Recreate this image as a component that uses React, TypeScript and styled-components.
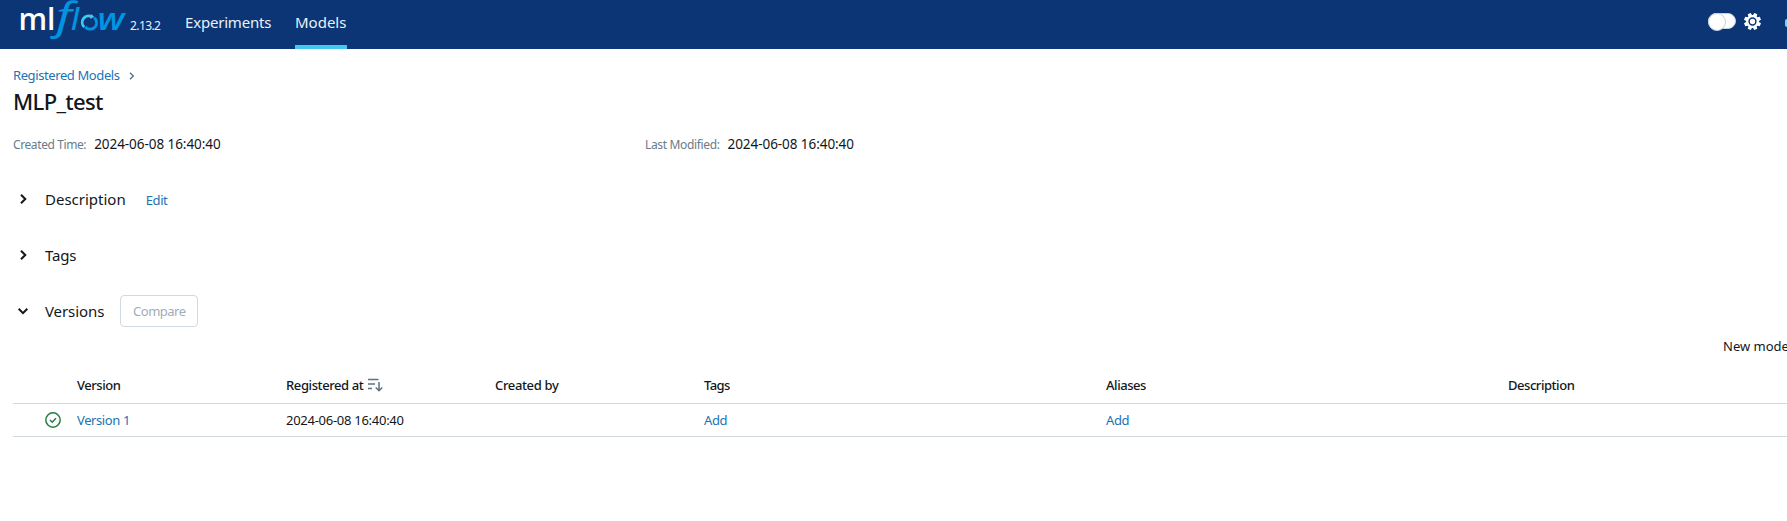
import React from 'react';
import styled, { createGlobalStyle } from 'styled-components';

const Global = createGlobalStyle`
  * { box-sizing: border-box; }
  html, body { margin: 0; padding: 0; overflow: hidden; background: #fff; }
  body { font-family: "Noto Sans", "Open Sans", sans-serif; font-size: 13px; color: #11171c; }
`;

const Page = styled.div`
  width: 1787px;
  height: 521px;
  overflow: hidden;
`;

const Header = styled.header`
  display: flex;
  height: 49px;
  background: #0b3574;
  color: #e7f1fb;
  overflow: hidden;
`;

const Logo = styled.svg`
  flex: none;
  width: 110px;
  height: 45px;
  margin-left: 18px;
  overflow: visible;
`;

const Release = styled.span`
  width: 57px;
  padding-left: 2px;
  font-size: 12px;
  line-height: 52px;
  letter-spacing: -0.6px;
`;

const NavItem = styled.a<{ $active?: boolean; $w: number; $ls: number }>`
  flex: none;
  width: ${p => p.$w}px;
  height: 49px;
  margin-right: 24px;
  font-size: 15px;
  line-height: 45px;
  letter-spacing: ${p => p.$ls}px;
  white-space: nowrap;
  border-bottom: 4px solid ${p => (p.$active ? '#43c9ed' : 'transparent')};
`;

const HeaderTools = styled.div`
  display: flex;
  align-items: center;
  flex: none;
  height: 42px;
  margin-left: auto;
`;

const Toggle = styled.span`
  width: 28px;
  height: 16px;
  border-radius: 8px;
  background: #fff;
  border: 1px solid #c5d0dc;
  margin-right: 8px;
  &::before {
    content: '';
    display: block;
    width: 16px;
    height: 16px;
    margin: -1px;
    border-radius: 50%;
    border: 1px solid #c5d0dc;
    background: #fff;
  }
`;

const Gear = styled.svg`
  width: 17px;
  height: 17px;
  margin-right: 24px;
`;

const Edge = styled.span`
  width: 2px;
  height: 8px;
  margin-top: 4px;
  border-radius: 3px 0 0 3px;
  background: #7fd0ee;
`;

const Main = styled.main`
  padding: 16px 0 0 13px;
`;

const Text = styled.span<{ $size?: number; $ls?: number; $color?: string; $weight?: number }>`
  font-size: ${p => p.$size ?? 13}px;
  letter-spacing: ${p => p.$ls ?? 0}px;
  color: ${p => p.$color ?? '#11171c'};
  font-weight: ${p => p.$weight ?? 400};
  white-space: nowrap;
`;

const Link = styled(Text).attrs({ as: 'a' })`
  color: #2272b4;
`;

const Breadcrumb = styled.nav`
  display: flex;
  align-items: center;
  height: 20px;
  svg { margin: 2px 0 0 9px; }
`;

const Title = styled.h1`
  height: 32px;
  margin: 0;
  font-size: 22px;
  line-height: 32px;
  font-weight: 500;
  letter-spacing: -0.65px;
`;

const Meta = styled.div`
  display: grid;
  grid-template-columns: 632px 1fr;
  height: 20px;
  margin-top: 17px;
`;

const MetaItem = styled.div`
  display: flex;
  align-items: baseline;
  gap: 8px;
  line-height: 20px;
`;

const Sections = styled.div`
  display: grid;
  grid-auto-rows: 56px;
  margin-top: 17px;
`;

const Section = styled.section`
  display: flex;
  align-items: center;
  svg { margin: 0 16px 0 4px; flex: none; }
`;

const EditLink = styled(Link)`
  margin: 2px 0 0 20px;
`;

const CompareButton = styled.button`
  width: 78px;
  height: 32px;
  margin-left: 16px;
  padding: 0;
  border: 1px solid #d1d9e1;
  border-radius: 4px;
  background: #fff;
  color: #a0adba;
  font: 13px "Noto Sans", sans-serif;
  letter-spacing: -0.5px;
`;

const Notice = styled.div`
  height: 20px;
  margin: -3px 0 0 1710px;
  line-height: 20px;
`;

const Row = styled.div<{ $h: number }>`
  display: grid;
  grid-template-columns: 64px 209px 209px 209px 402px 402px 1fr;
  height: ${p => p.$h}px;
  border-bottom: 1px solid #d1d9e1;
  align-items: center;
`;

const Table = styled.div`
  margin-top: 11px;
`;

const Cell = styled.div`
  display: flex;
  align-items: center;
  gap: 5px;
`;

const Status = styled.div`
  display: flex;
  padding-left: 32px;
`;

const Chevron = ({ down }: { down?: boolean }) => (
  <svg width="12" height="12" viewBox="0 0 12 12" fill="none" stroke="#11171c" strokeWidth="2">
    <path d={down ? 'M1.7 3.8 6 8.1l4.3-4.3' : 'M4 1.7 8.3 6 4 10.3'} />
  </svg>
);

const gearPath = () => {
  const pts: string[] = [];
  for (let i = 0; i < 8; i++) {
    const a = (i * Math.PI) / 4 + Math.PI / 8;
    [[-0.3, 6.1], [-0.19, 8.2], [0.19, 8.2], [0.3, 6.1]].forEach(([d, r]) =>
      pts.push(`${(8 + r * Math.cos(a + d)).toFixed(2)} ${(8 + r * Math.sin(a + d)).toFixed(2)}`));
  }
  return `M${pts.join('L')}Z`;
};

export default function App() {
  return (
    <Page>
      <Global />
      <Header>
        <Logo viewBox="18 0 110 45">
          <text x="18.5" y="30" fill="#fff" fontFamily="Open Sans" fontWeight="600" fontSize="30" textLength="37" lengthAdjust="spacingAndGlyphs">ml</text>
          <text x="56" y="30" fill="#0194e2" fontFamily="Noto Sans" fontStyle="italic" fontWeight="400" fontSize="39" textLength="16" lengthAdjust="spacingAndGlyphs">f</text>
          <text x="71" y="30" fill="#0194e2" fontFamily="Noto Sans" fontStyle="italic" fontWeight="500" fontSize="30">l</text>
          <path d="M84.2 27a6.4 6.4 0 0 1 7.4-10.3" fill="none" stroke="#43c9ed" strokeWidth="2.8" />
          <path d="M94 17.6a6.4 6.4 0 0 1-7.6 10.3" fill="none" stroke="#0194e2" strokeWidth="2.8" />
          <path d="m91.2 14 3 2.8-3.8 2.2z" fill="#43c9ed" />
          <path d="m87 25.4-3.2 2.4 3.2 2.4z" fill="#0194e2" />
          <text x="97.5" y="30" fill="#0194e2" fontFamily="Open Sans" fontStyle="italic" fontWeight="600" fontSize="30" textLength="27" lengthAdjust="spacingAndGlyphs">w</text>
        </Logo>
        <Release>2.13.2</Release>
        <NavItem $w={86} $ls={-0.2}>Experiments</NavItem>
        <NavItem $w={52} $ls={0} $active>Models</NavItem>
        <HeaderTools>
          <Toggle />
          <Gear viewBox="0 0 16 16">
            <path d={gearPath()} fill="#fff" />
            <circle cx="8" cy="8" r="3.2" fill="#fff" stroke="#0b3574" strokeWidth="1.4" />
          </Gear>
          <Edge />
        </HeaderTools>
      </Header>
      <Main>
        <Breadcrumb>
          <Link $ls={-0.4}>Registered Models</Link>
          <svg width="6" height="8" viewBox="0 0 6 8" fill="none" stroke="#5f7281" strokeWidth="1.4"><path d="M1 .8 4.3 4 1 7.2" /></svg>
        </Breadcrumb>
        <Title>MLP_test</Title>
        <Meta>
          <MetaItem><Text $size={12} $color="#6b7b88" $ls={-0.4}>Created Time:</Text><Text $size={13.5} $ls={-0.06}>2024-06-08 16:40:40</Text></MetaItem>
          <MetaItem><Text $size={12} $color="#6b7b88" $ls={-0.35}>Last Modified:</Text><Text $size={13.5} $ls={-0.06}>2024-06-08 16:40:40</Text></MetaItem>
        </Meta>
        <Sections>
          <Section><Chevron /><Text $size={15}>Description</Text><EditLink $ls={-0.4}>Edit</EditLink></Section>
          <Section><Chevron /><Text $size={15} $ls={-0.2}>Tags</Text></Section>
          <Section><Chevron down /><Text $size={15} $ls={-0.08}>Versions</Text><CompareButton>Compare</CompareButton></Section>
        </Sections>
        <Notice><Text $ls={0}>New model registry UI</Text></Notice>
        <Table>
          <Row $h={37}>
            <Cell />
            <Cell><Text $weight={500} $ls={-0.45}>Version</Text></Cell>
            <Cell>
              <Text $weight={500} $ls={-0.4}>Registered at</Text>
              <svg width="15" height="14" viewBox="0 0 15 14" fill="none" stroke="#5f7281" strokeWidth="1.5"><path d="M0 1.5h10.5M0 6h7M0 10.5h4M11 4v8.5M7.8 9.5l3.2 3.2 3.2-3.2" /></svg>
            </Cell>
            <Cell><Text $weight={500} $ls={-0.35}>Created by</Text></Cell>
            <Cell><Text $weight={500} $ls={-0.6}>Tags</Text></Cell>
            <Cell><Text $weight={500} $ls={-0.45}>Aliases</Text></Cell>
            <Cell><Text $weight={500} $ls={-0.45}>Description</Text></Cell>
          </Row>
          <Row $h={33}>
            <Status>
              <svg width="16" height="16" viewBox="0 0 16 16" fill="none" stroke="#277c43" strokeWidth="1.5"><circle cx="8" cy="8" r="7.2" /><path d="m5 8 2.2 2.2L11 6.2" /></svg>
            </Status>
            <Cell><Link $ls={-0.4}>Version 1</Link></Cell>
            <Cell><Text $ls={-0.27}>2024-06-08 16:40:40</Text></Cell>
            <Cell />
            <Cell><Link $ls={-0.4}>Add</Link></Cell>
            <Cell><Link $ls={-0.4}>Add</Link></Cell>
            <Cell />
          </Row>
        </Table>
      </Main>
    </Page>
  );
}
